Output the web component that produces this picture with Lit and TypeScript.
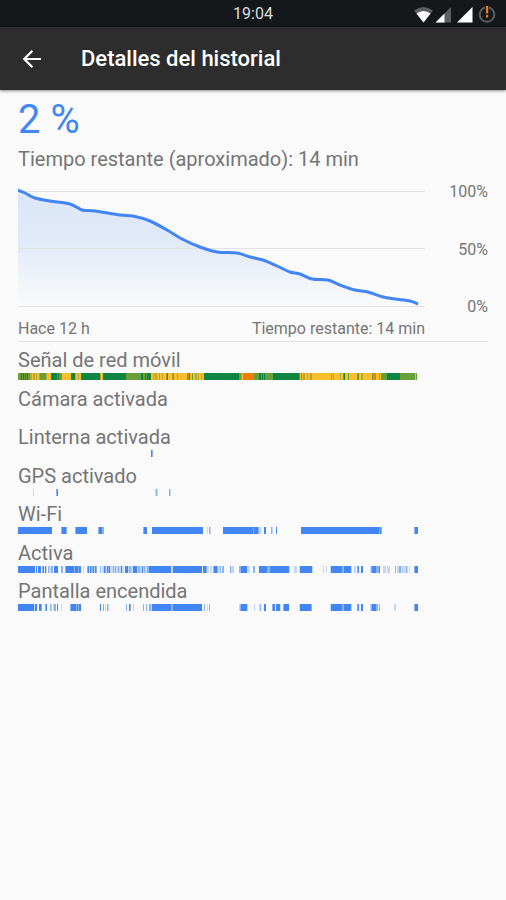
import { LitElement, html, svg, css } from "lit";
import { customElement, property } from "lit/decorators.js";

/** A stretch of time on a track: start, end, tone. */
type Segment = [number, number, string];

/** Width of the time axis, in chart units. */
const SPAN = 407;

/** Battery level curve, in chart units. */
const LEVELS: [number, number][] = [
  [0, 2], [7, 5], [17, 10], [32, 13], [52, 16], [64, 22], [77, 23], [102, 27], [115, 28],
  [132, 33], [149, 42], [164, 51], [182, 59], [199, 64], [219, 65], [232, 69], [245, 72],
  [259, 78], [272, 84], [282, 86], [294, 91], [310, 92], [322, 97], [337, 102], [350, 104],
  [365, 109], [377, 111], [392, 113], [400, 116],
];

/** f = solid, m = medium, l = light; g, e, y, v, o = signal strengths. */
const parse = (text: string): Segment[] =>
  text.trim().split(/\s+/).filter(Boolean).map((item) => {
    const [, a, b, tone] = item.match(/^(\d+)-(\d+)(\w)$/)!;
    return [Number(a), Number(b), tone];
  });

const TRACKS: { label: string; segments: Segment[] }[] = [
  {
    label: "Señal de red móvil",
    segments: parse(`0-3e 3-4g 4-5e 5-6g 6-7e 7-8g 8-9e 9-10g 10-12e 12-14v 14-15y 15-17v 17-18y 18-19v
      19-21y 21-22v 22-28e 28-29v 29-33y 33-39g 39-40e 40-41g 41-44e 44-53y 53-57g 57-58v 58-60y 60-61v
      61-63y 63-82g 82-83v 83-85y 85-108g 108-123e 123-125g 125-127e 127-128g 128-129e 129-133g 133-135y
      135-136v 136-137y 137-139v 139-141y 141-142v 142-144y 144-145v 145-148y 148-149v 149-150g 150-154y
      154-155v 155-156e 156-159y 159-160v 160-169y 169-170e 170-171v 171-172g 172-174y 174-175e 175-177y
      177-179v 179-180y 180-181v 181-183y 183-184v 184-186y 186-221g 221-223e 223-224v 224-225y 225-236o
      236-239e 239-241e 241-243g 243-244e 244-245g 245-246e 246-247g 247-255e 255-281g 281-282e 282-283y
      283-284e 284-285y 285-287v 287-289y 289-290v 290-292y 292-294v 294-313y 313-314v 314-315y 315-316v
      316-322y 322-323v 323-325y 325-326e 326-327g 327-330y 330-331e 331-339y 339-341e 341-343y 343-345v
      345-354y 354-355e 355-356v 356-358o 358-361y 361-362v 362-363y 363-369e 369-382g 382-397e 397-398y
      398-399e`),
  },
  { label: "Cámara activada", segments: [] },
  { label: "Linterna activada", segments: parse("133-134f 134-135m") },
  { label: "GPS activado", segments: parse("15-16l 38-39m 39-40f 137-138l 138-139m 139-140l 151-152m 152-153l") },
  {
    label: "Wi-Fi",
    segments: parse(`0-34f 43-44m 44-48f 48-49m 57-58m 58-69f 80-81m 81-84f 84-86m 125-126m 126-129f
      134-185f 189-190l 191-192m 192-193l 205-235f 235-236m 236-240f 240-241m 241-243l 246-248f 253-254m
      254-255l 258-259f 283-361f 361-362m 362-363f 363-364m 396-397m 397-400f`),
  },
  {
    label: "Activa",
    segments: parse(`0-17f 18-19f 20-23f 24-25m 25-26f 27-28f 28-29l 30-31m 31-33l 33-35m 36-40f 43-45m
      47-48m 48-56f 56-57m 57-60f 60-61m 61-63f 65-66l 69-70m 70-71f 71-72l 72-73f 73-75m 75-76f 76-77l
      77-78f 78-79m 82-83m 84-86l 86-87f 87-88m 88-89l 89-90f 90-91m 91-92f 92-95l 95-96m 96-97l 97-98m
      98-100l 100-101m 101-103l 103-104f 104-106l 107-110f 110-111l 111-113m 113-115l 115-119f 119-120l
      120-122m 122-124l 124-125f 125-126l 126-127m 127-129l 129-131m 131-153f 153-155l 155-184f 185-188f
      188-189m 189-191l 192-194l 195-196m 196-199f 199-200m 200-202l 202-203m 204-206m 212-213m 213-216l
      221-223m 223-229f 229-232l 235-237m 241-249f 249-250m 250-252m 252-271f 271-272l 276-279l 281-282l
      282-294f 294-295l 305-306l 308-309l 312-313l 313-324f 324-326m 326-333f 333-334l 336-338l 339-340m
      340-341f 343-345f 352-353l 353-354m 354-358f 358-359m 359-361m 361-362f 365-368l 369-372l 377-378m
      379-381l 381-383m 383-388l 388-389m 389-390l 391-392l 396-397m 397-400f`),
  },
  {
    label: "Pantalla encendida",
    segments: parse(`0-16f 16-17l 17-19f 21-23f 23-24m 27-28m 28-29f 32-33m 33-34l 35-36l 36-38m 39-40f
      43-44l 52-53m 53-58f 58-59m 59-60f 60-61m 61-63f 82-83f 85-86m 87-88l 89-90m 90-91l 108-109m
      111-112f 112-113m 115-116l 125-126m 128-129m 131-133m 133-134l 134-153f 153-155m 155-184f 186-187m
      189-190l 191-192m 221-222l 222-223m 223-229f 229-230l 236-237l 241-242l 242-243m 246-248f
      254-255m 255-257f 258-262f 262-263l 265-266m 266-271f 281-282l 282-293f 293-294m 312-313l 313-324f
      324-326m 326-333f 333-334l 339-340m 340-341f 343-345f 352-353l 353-354m 354-358f 358-359m 359-360m
      361-362m 376-378l 396-397m 397-400f`),
  },
];

/** Smooth path through all the points. */
function smooth(points: [number, number][]): string {
  let d = `M${points[0][0]} ${points[0][1]}`;
  for (let i = 0; i < points.length - 1; i++) {
    const p0 = points[Math.max(0, i - 1)];
    const p1 = points[i];
    const p2 = points[i + 1];
    const p3 = points[Math.min(points.length - 1, i + 2)];
    d += `C${p1[0] + (p2[0] - p0[0]) / 6} ${p1[1] + (p2[1] - p0[1]) / 6} ${p2[0] - (p3[0] - p1[0]) / 6} ${
      p2[1] - (p3[1] - p1[1]) / 6
    } ${p2[0]} ${p2[1]}`;
  }
  return d;
}

@customElement("status-bar")
export class StatusBar extends LitElement {
  static styles = css`
    :host {
      display: grid;
      grid-template-columns: 1fr auto 1fr;
      align-items: center;
      height: 27px;
      background: #14181b;
      color: #dcdedf;
      font-size: 16px;
      line-height: 28px;
    }
    .time {
      grid-column: 2;
    }
    .icons {
      justify-self: end;
      display: block;
      width: 92px;
      height: 27px;
    }
  `;
  render() {
    return html`
      <span class="time">19:04</span>
      <svg class="icons" viewBox="0 0 92 27" aria-hidden="true">
        <path fill="#5c5f61" d="M0 9.500Q9.500 2.500 19 9.500L9.500 21.500Z" />
        <path fill="#fff" d="M2.500 12.500Q9.500 7.500 16.500 12.500L9.500 21.500Z" />
        <path fill="#5c5f61" d="M37 6V21.500H21.500Z" />
        <path fill="#fff" d="M30.500 12.500V21.500H21.500Z" />
        <path fill="#fff" d="M58.500 6V21.500H43Z" />
        <circle cx="73" cy="13.500" r="7.300" fill="none" stroke="#5c5f61" stroke-width="2" />
        <path fill="#14181b" d="M71 4h4v4h-4z" />
        <path fill="#f57c1f" d="M72 5h2.200v7.600h-2.200zM72 14h2.200v2.400h-2.200z" />
      </svg>
    `;
  }
}

@customElement("app-bar")
export class AppBar extends LitElement {
  static styles = css`
    :host {
      display: flex;
      align-items: center;
      height: 63px;
      padding: 0 20px;
      background: #2d2d2d;
      box-shadow: 0 1px 3px rgba(0, 0, 0, 0.45);
    }
    .back {
      display: flex;
      padding: 0;
      border: 0;
      background: none;
      color: #fff;
    }
    .arrow {
      width: 24px;
      height: 24px;
    }
    .title {
      margin: 0 0 0 37px;
      color: #fff;
      font-size: 22px;
      font-weight: 500;
      line-height: 28px;
    }
  `;
  render() {
    return html`
      <button class="back" type="button" aria-label="Atrás">
        <svg class="arrow" viewBox="0 0 24 24" aria-hidden="true">
          <path d="M21 12H4.500M12.500 3.700L4.200 12L12.500 20.300" fill="none" stroke="currentColor" stroke-width="2.200" />
        </svg>
      </button>
      <h1 class="title">Detalles del historial</h1>
    `;
  }
}

@customElement("battery-chart")
export class BatteryChart extends LitElement {
  static styles = css`
    :host {
      display: grid;
      grid-template-columns: 1fr 63px;
      color: #757575;
      font-size: 16px;
      line-height: 20px;
    }
    .plot {
      display: block;
      width: 100%;
      height: 121px;
    }
    .grid {
      stroke: #e2e2e2;
      stroke-width: 1;
    }
    .curve {
      fill: none;
      stroke: #4285f4;
      stroke-width: 3;
      stroke-linejoin: round;
    }
    .scale {
      display: flex;
      flex-direction: column;
      justify-content: space-between;
      margin: -6px 0 -8px;
      text-align: right;
    }
    .times {
      display: flex;
      justify-content: space-between;
      padding-top: 10px;
    }
  `;
  render() {
    const line = smooth(LEVELS);
    return html`
      <svg class="plot" viewBox="0 0 ${SPAN} 121" preserveAspectRatio="none" role="img" aria-label="Nivel de batería">
        <defs>
          <linearGradient id="fade" gradientUnits="userSpaceOnUse" x1="0" y1="0" x2="0" y2="118">
            <stop offset="0" stop-color="#dae6f9" />
            <stop offset="0.450" stop-color="#e1eaf8" />
            <stop offset="1" stop-color="#fafafa" />
          </linearGradient>
        </defs>
        <path d="${line}V118H0Z" fill="url(#fade)" />
        ${[3, 60, 118].map((y) => svg`<path class="grid" d="M0 ${y + 0.5}H${SPAN}" />`)}
        <path class="curve" d=${line} vector-effect="non-scaling-stroke" />
      </svg>
      <div class="scale"><span>100%</span><span>50%</span><span>0%</span></div>
      <div class="times"><span>Hace 12 h</span><span>Tiempo restante: 14 min</span></div>
    `;
  }
}

@customElement("usage-track")
export class UsageTrack extends LitElement {
  @property() label = "";
  @property({ attribute: false }) segments: Segment[] = [];
  static styles = css`
    :host {
      display: block;
      color: #757575;
      font-size: 20px;
      line-height: 25px;
    }
    .label {
      margin: 0;
      font: inherit;
    }
    .track {
      display: block;
      width: 100%;
      height: 7px;
    }
    .f { fill: #4285f4; }
    .m { fill: #8ab3f6; }
    .l { fill: #c3d7f8; }
    .g { fill: #0f8543; }
    .e { fill: #689f38; }
    .v { fill: #b5a838; }
    .y { fill: #fbbf2d; }
    .o { fill: #f57c0c; }
  `;
  render() {
    return html`
      <h2 class="label">${this.label}</h2>
      <svg class="track" viewBox="0 0 ${SPAN} 7" preserveAspectRatio="none" aria-hidden="true">
        ${this.segments.map(
          ([from, to, tone]) => svg`<rect class=${tone} x=${from} y="0" width=${to - from} height="7" />`,
        )}
      </svg>
    `;
  }
}

@customElement("app-root")
export class AppRoot extends LitElement {
  static styles = css`
    :host {
      display: block;
      min-height: 100vh;
      background: #fafafa;
      font-family: Roboto, "Noto Sans", sans-serif;
    }
    .content {
      padding: 5px 18px 24px;
    }
    .level {
      margin: 0;
      color: #4285f4;
      font-size: 40px;
      line-height: 50px;
    }
    .remaining {
      margin: 0 0 15px;
      color: #757575;
      font-size: 20px;
      line-height: 28px;
    }
    .tracks {
      display: grid;
      grid-auto-rows: 1fr;
      height: 270px;
      padding: 6px 63px 0 0;
    }
    .divider {
      height: 1px;
      margin: 2px 0 0;
      border: 0;
      background: #e2e2e2;
    }
  `;
  render() {
    return html`
      <status-bar></status-bar>
      <app-bar></app-bar>
      <main class="content">
        <p class="level">2 %</p>
        <p class="remaining">Tiempo restante (aproximado): 14 min</p>
        <battery-chart></battery-chart>
        <hr class="divider" />
        <section class="tracks">
          ${TRACKS.map((t) => html`<usage-track .label=${t.label} .segments=${t.segments}></usage-track>`)}
        </section>
      </main>
    `;
  }
}
